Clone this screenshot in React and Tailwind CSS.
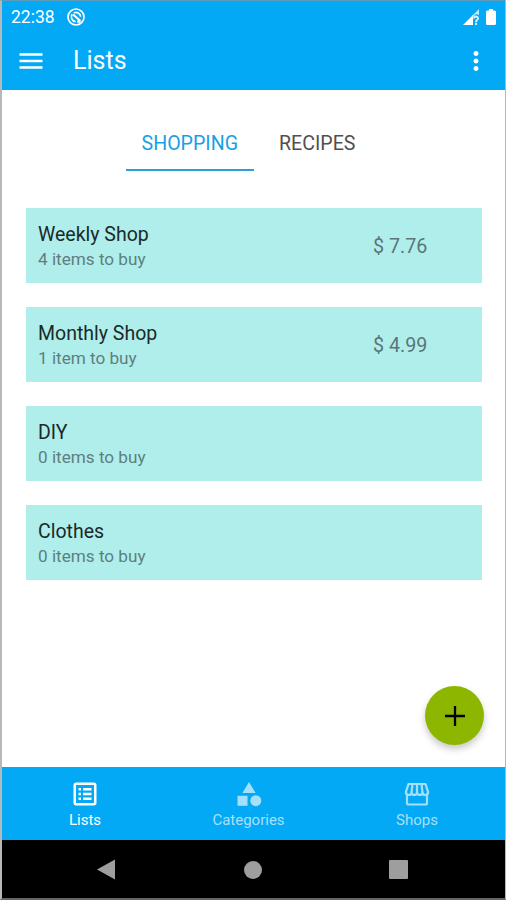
import React, { useState } from 'react';
import { MdMoreVert } from 'react-icons/md';

const LISTS = [
  { id: 1, name: 'Weekly Shop', summary: '4 items to buy', total: '$ 7.76' },
  { id: 2, name: 'Monthly Shop', summary: '1 item to buy', total: '$ 4.99' },
  { id: 3, name: 'DIY', summary: '0 items to buy' },
  { id: 4, name: 'Clothes', summary: '0 items to buy' },
];

function SyncIcon() {
  return (
    <svg width="18" height="18" viewBox="0 0 18 18" fill="none" stroke="currentColor">
      <circle cx="9" cy="9" r="8" strokeWidth="1.7" />
      <path d="M8.5 13.6A4.7 4.7 0 0 1 5.2 6.2M6.8 5A4.7 4.7 0 0 1 13.6 8.8" strokeWidth="1.7" />
      <path d="M6 6.5l7.5 6.5M10 13.6h3.5" strokeWidth="2.1" />
    </svg>
  );
}

function SignalIcon() {
  return (
    <svg width="16" height="16" viewBox="0 0 16 16" fill="currentColor">
      <path d="M0 16L10 6v10z" />
      <path d="M9 7l7-7v6L13 5l-3 3z" opacity=".75" />
      <path d="M11 9.5c.2-2.600 4-2.600 4-.2 0 1.700-2 1.700-2 3.600M13 13.800V16" fill="none" stroke="currentColor" strokeWidth="1.9" opacity=".85" />
    </svg>
  );
}

function BatteryIcon() {
  return (
    <svg width="10" height="16" viewBox="0 0 10 16" fill="currentColor">
      <path d="M3 0h4v1.6h1.500A1.500 1.500 0 0 1 10 3.100v11.400a1.500 1.500 0 0 1-1.500 1.500h-7A1.500 1.500 0 0 1 0 14.500V3.100a1.500 1.500 0 0 1 1.500-1.500H3z" />
    </svg>
  );
}

function MenuIcon() {
  return (
    <svg width="24" height="18" viewBox="0 0 24 18" stroke="currentColor" strokeWidth="2.7">
      <path d="M.5 2.500h23M.5 9h23M.5 15.500h23" />
    </svg>
  );
}

function ListIcon() {
  return (
    <svg width="24" height="24" viewBox="0 0 24 24" fill="none" stroke="currentColor" strokeWidth="2.5">
      <rect x="1.75" y="1.75" width="20.5" height="20.5" rx="1.5" />
      <path d="M5.5 7.2H8M10 7.2h8.500M5.5 12H8M10 12h8.500M5.5 16.800H8M10 16.800h8.500" strokeWidth="2.4" />
    </svg>
  );
}

function CategoryIcon() {
  return (
    <svg width="26" height="26" viewBox="0 0 26 26" fill="currentColor">
      <path d="M13 1l6.600 11H6.400z" />
      <rect x="1.5" y="14.8" width="10" height="10" />
      <circle cx="19.8" cy="19.7" r="5.5" />
    </svg>
  );
}

function ShopIcon() {
  return (
    <svg width="26" height="24" viewBox="0 0 26 24" fill="none" stroke="currentColor" strokeWidth="2.2" strokeLinejoin="round">
      <path d="M4.500 2h17l2.500 7.600a2.800 2.800 0 0 1-5.500 1.100 2.800 2.800 0 0 1-5.500 0 2.800 2.800 0 0 1-5.500 0A2.800 2.800 0 0 1 2 9.600z" />
      <path d="M8.500 2l-1 8.700M13 2v8.700M17.500 2l1 8.700" />
      <path d="M3 12V21a1.500 1.500 0 0 0 1.500 1.500h17A1.500 1.500 0 0 0 23 21v-9" />
    </svg>
  );
}

function PlusIcon() {
  return (
    <svg width="20" height="20" viewBox="0 0 20 20" stroke="currentColor" strokeWidth="2.3">
      <path d="M10 0v20M0 10h20" />
    </svg>
  );
}

const NAV_ITEMS = [
  { label: 'Lists', Icon: ListIcon, className: 'w-[166px] text-white' },
  { label: 'Categories', Icon: CategoryIcon, className: 'w-[161px]' },
  { label: 'Shops', Icon: ShopIcon, className: 'w-[176px]' },
];

function ListCard({ list }) {
  return (
    <div className="flex h-[74.5px] items-center bg-[#afeeeb] pt-[4px] pl-3">
      <div className="w-[335px]">
        <p className="text-[19.5px] leading-[25px] text-[#1b2929]">{list.name}</p>
        <p className="text-[17.15px] leading-[25px] text-[#5f7f7e]">{list.summary}</p>
      </div>
      {list.total && <span className="text-[19.7px] text-[#5a7776]">{list.total}</span>}
    </div>
  );
}

export default function App() {
  const [tab, setTab] = useState('SHOPPING');

  return (
    <div className="flex h-[900px] w-[506px] flex-col border-t border-r border-b-2 border-l-2 border-t-[#5c9cbb] border-r-[#b5b9bb] border-b-[#666666] border-l-[#b5b9bb] bg-white font-[Roboto,sans-serif]">
      {/* Status and app bar */}
      <header className="h-[89px] bg-[#03a9f4] text-white">
        <div className="flex h-[31px] items-center pr-[9px] pl-[9px]">
          <span className="w-[56px] pt-px text-[17.5px]">22:38</span>
          <SyncIcon />
          <div className="ml-auto flex items-center gap-[7px]">
            <SignalIcon />
            <BatteryIcon />
          </div>
        </div>
        <div className="flex h-[58px] items-center pl-[17px]">
          <MenuIcon />
          <h1 className="ml-[30px] text-[25px]">Lists</h1>
          <MdMoreVert className="mr-[14px] ml-auto" size={30} />
        </div>
      </header>

      <main className="relative h-[677px]">
        {/* Tabs */}
        <div className="ml-[124px] flex pt-[24px]">
          {['SHOPPING', 'RECIPES'].map((name) => (
            <button
              key={name}
              onClick={() => setTab(name)}
              className={`h-[57px] w-[127.5px] border-b-2 pt-[4px] text-[19.6px] ${tab === name ? 'border-[#2b9fd8] text-[#1a9fe3]' : 'border-transparent text-[#505050]'}`}
            >
              {name}
            </button>
          ))}
        </div>

        {/* Shopping lists */}
        <div className="mt-[37px] ml-6 flex w-[456px] flex-col gap-[24.5px]">
          {LISTS.map((list) => <ListCard key={list.id} list={list} />)}
        </div>

        <button className="absolute right-[21px] bottom-[22px] flex h-[59px] w-[59px] items-center justify-center rounded-full bg-[#8db600] text-black shadow-[0_4px_7px_rgba(0,0,0,0.22)]">
          <PlusIcon />
        </button>
      </main>

      {/* Bottom navigation */}
      <nav className="flex h-[73px] bg-[#03a9f4] text-[15px] text-[#a5e0fb]">
        {NAV_ITEMS.map(({ label, Icon, className }) => (
          <div key={label} className={`flex flex-col items-center pt-[13px] ${className}`}>
            <div className="flex h-[27px] items-center">
              <Icon />
            </div>
            <span className="pt-[3px] leading-5">{label}</span>
          </div>
        ))}
      </nav>

      {/* System buttons */}
      <div className="flex flex-1 items-center bg-black pt-px pl-[95px] text-[#9e9e9e]">
        <svg width="19" height="21" viewBox="0 0 19 21" fill="currentColor"><path d="M0 10.500L18 .5v20z" /></svg>
        <div className="ml-[128px] h-[18px] w-[18px] rounded-full bg-[#9e9e9e]" />
        <div className="ml-[127px] h-[19px] w-[19px] rounded-[1px] bg-[#9e9e9e]" />
      </div>
    </div>
  );
}
